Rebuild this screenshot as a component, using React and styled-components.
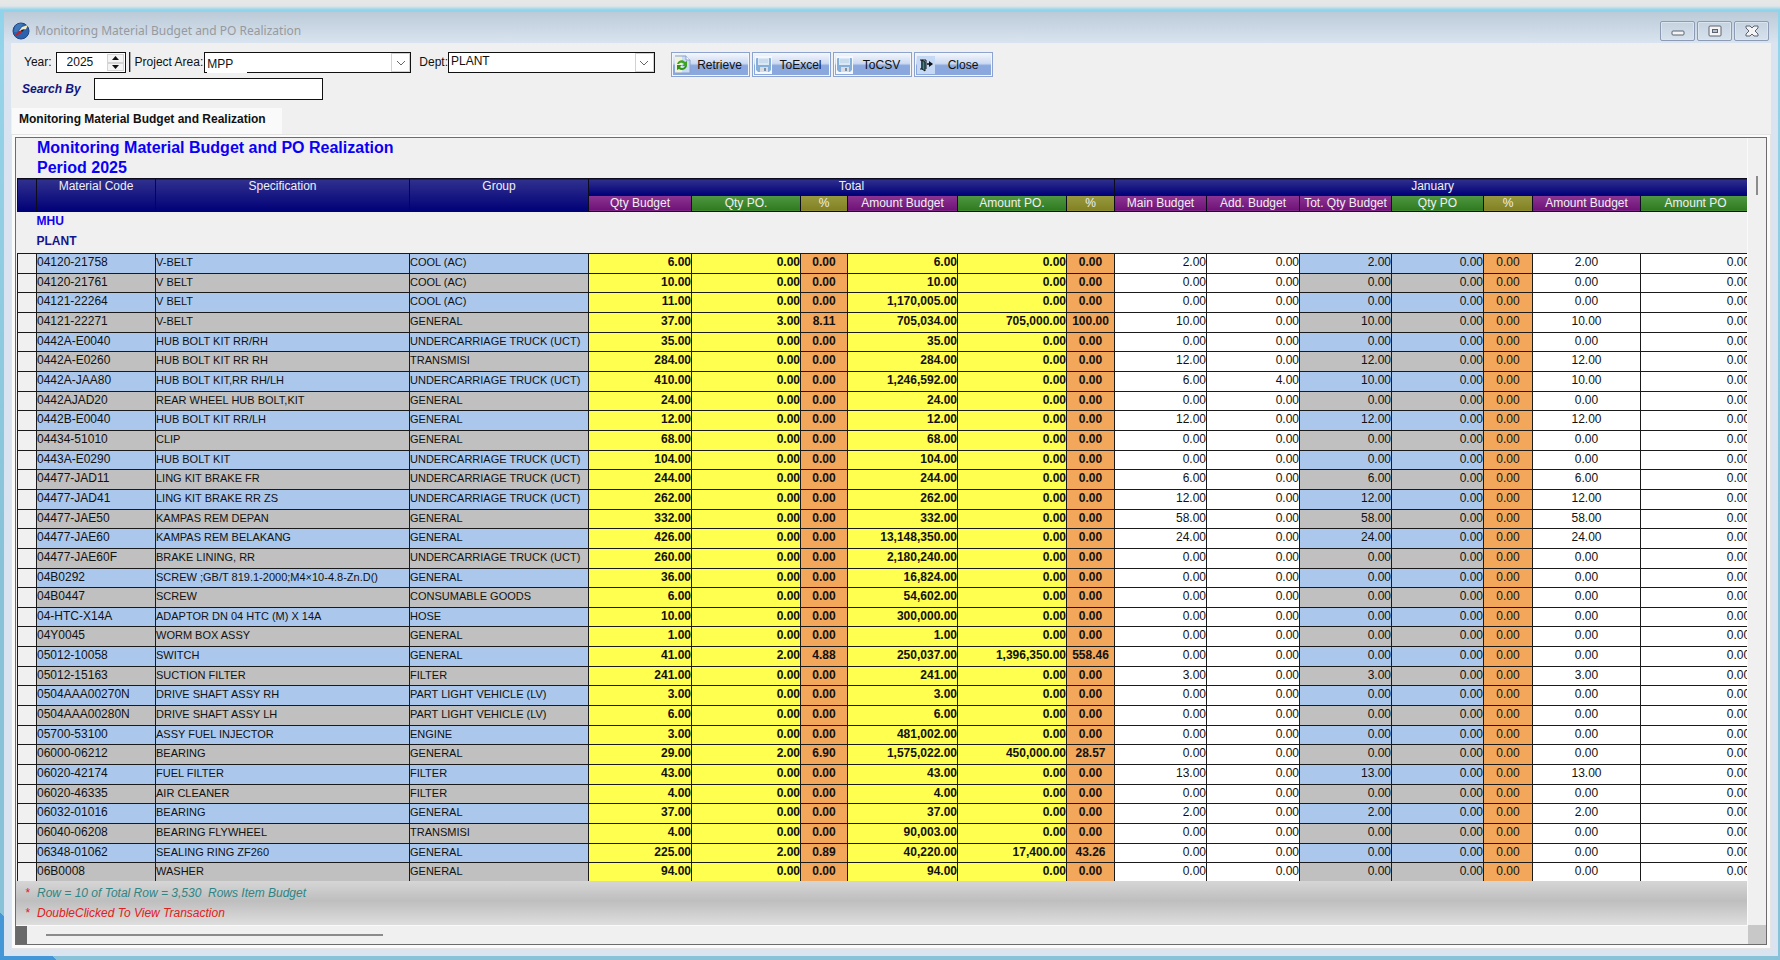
import React, { useState } from "react"
import styled, { createGlobalStyle } from "styled-components"

const GlobalStyle = createGlobalStyle`
  * {
    box-sizing: border-box;
  }
  body {
    margin: 0;
    font-family: "Liberation Sans", Arial, sans-serif;
    font-size: 12px;
    color: #111;
  }
  button, input, select {
    font: inherit;
    color: inherit;
  }
`

const Desktop = styled.div`
  min-height: 100vh;
  display: flex;
  padding: 12px 2px 4px 4px;
  background:
    linear-gradient(to top right, #4497d6 50%, transparent 50%) left bottom / 57px 47px no-repeat,
    linear-gradient(to bottom, #e6e8e6 0, #e2e6e6 6px, #8fd4ec 10px, #96d4ea 60px, #87c2d8 560px);
`

const Window = styled.div`
  flex: 1;
  min-width: 0;
  display: flex;
  flex-direction: column;
  padding: 0 7px 7px;
  background: linear-gradient(to bottom, #bccad7 0, #d9e4f0 31px);
`

const TitleBar = styled.header`
  display: flex;
  align-items: center;
  height: 31px;
  padding: 6px 2px 0 1px;
`

const WindowTitle = styled.h1`
  flex: 1;
  margin: 0 0 0 5px;
  font: 400 12px/16px "Noto Sans", sans-serif;
  color: #969a9f;
`

const WindowButtons = styled.div`
  display: flex;
  gap: 2px;
`

const WindowButton = styled.button`
  display: grid;
  place-items: center;
  width: 35px;
  height: 20px;
  padding: 0;
  border: 1px solid #8d9ab3;
  border-radius: 2px;
  background: transparent;
  box-shadow: inset 0 0 0 1px #dbe5ef;
`

const Client = styled.main`
  flex: 1;
  min-height: 0;
  display: flex;
  flex-direction: column;
  background: #f0f0f0;
`

const Toolbar = styled.div`
  display: flex;
  align-items: flex-start;
  height: 35px;
  padding: 9px 0 0 13px;
`

const Label = styled.label`
  line-height: 20px;
  white-space: nowrap;
  margin-right: ${p => p.$gap || 0}px;
`

const Divider = styled.span`
  width: 2px;
  height: 20px;
  margin: 0 4px 0 3px;
  border-left: 1px solid #222;
  border-right: 1px solid #aaa;
`

const YearBox = styled.div`
  display: flex;
  width: 70px;
  height: 21px;
  padding: 0 1px;
  border: 1px solid #111;
  background: #fff;
`

const YearInput = styled.input`
  flex: 1;
  min-width: 0;
  padding: 0 0 2px 9px;
  border: 0;
  background: transparent;
`

const Spinner = styled.div`
  display: grid;
  width: 17px;
  padding: 1px 0;
`

const SpinButton = styled.button`
  display: grid;
  place-items: center;
  padding: 0;
  border: 1px solid #d4d4d4;
  background: #f4f4f4;
`

const Combo = styled.div`
  position: relative;
  display: flex;
  width: 207px;
  height: 21px;
  margin-right: 8px;
  border: 1px solid #111;
  background: #fff;
  ${p => p.$notched && `
    &::after {
      content: "";
      position: absolute;
      left: 2px;
      bottom: -1px;
      width: 40px;
      height: 1px;
      background: #fff;
    }
  `}
`

const ComboSelect = styled.select`
  flex: 1;
  appearance: none;
  padding: ${p => (p.$low ? "2px" : "0")} 20px ${p => (p.$low ? "0" : "3px")} 2px;
  border: 0;
  background: transparent;
`

const ComboArrow = styled.span`
  position: absolute;
  top: 0;
  right: 0;
  bottom: 0;
  display: grid;
  place-items: center;
  width: 19px;
  border: 1px solid #d2d2d2;
  background: #fff;
  pointer-events: none;
`

const Actions = styled.div`
  display: flex;
  gap: 2px;
  margin-left: 8px;
`

const ActionButton = styled.button`
  display: flex;
  align-items: center;
  width: 79px;
  height: 25px;
  padding: 0 1px 0 2px;
  border: 1px solid #8ca2cf;
  box-shadow: inset 0 0 0 1px #f2f6fd;
  background: linear-gradient(to bottom, #f4f7fd 0, #cddaf2 45%, #8aa8de 55%, #8aa8de 100%);

  svg {
    flex: none;
  }
  span {
    flex: 1;
    text-align: center;
  }
`

const SearchRow = styled.div`
  display: flex;
  align-items: center;
  height: 22px;
  padding-left: 11px;
`

const SearchLabel = styled.label`
  width: 72px;
  font-weight: 700;
  font-style: italic;
  color: #14147c;
`

const SearchInput = styled.input`
  width: 229px;
  height: 22px;
  padding: 0 4px;
  border: 1px solid #111;
  background: #fff;
`

const TabBar = styled.div`
  display: flex;
  height: 34px;
  padding: 8px 0 0 1px;
`

const Tab = styled.button`
  width: 270px;
  padding: 0 0 4px 7px;
  border: 0;
  background: #fafafa;
  font-weight: 700;
  text-align: left;
  white-space: nowrap;
`

const TabPanel = styled.section`
  flex: 1;
  display: flex;
  padding: 2px 3px 3px;
  border: 1px solid #e4e4e4;
  background: #fbfbfb;
`

const Sheet = styled.div`
  flex: 1;
  min-width: 0;
  display: grid;
  grid-template: 1fr 19px / minmax(0, 1fr) 18px;
  border: 1px solid #6c6c6c;
  background: #f0f0f0;
`

const Report = styled.div`
  display: flex;
  flex-direction: column;
  overflow: hidden;
  border-right: 1px solid #fafafa;
`

const ReportTitle = styled.h2`
  margin: 0;
  padding-left: 21px;
  font-size: 16px;
  line-height: 20px;
  color: #0a00f5;
`

const TableArea = styled.div`
  flex: 1;
  display: grid;
  padding-left: 1px;
`

const Table = styled.table`
  width: 1733px;
  table-layout: fixed;
  border-collapse: collapse;
`

const headFill = {
  navy: "linear-gradient(to bottom, #30308e, #000078)",
  purple: "linear-gradient(to bottom, #8c3594, #6f1277)",
  green: "linear-gradient(to bottom, #509842, #2f7a20)",
  olive: "linear-gradient(to bottom, #98983f, #828224)",
}

const HeadCell = styled.th`
  height: ${p => (p.rowSpan ? 33 : 16)}px;
  padding: 0;
  border: 1px solid #0c0c1c;
  background: ${p => headFill[p.$fill]};
  color: #f0f0f4;
  font-weight: 400;
  line-height: 15px;
  vertical-align: top;
  white-space: nowrap;
`

const GroupCell = styled.th`
  height: 21px;
  padding: 0 0 3px 19px;
  color: ${p => p.$color};
  text-align: left;
`

const tones = { yellow: "#ffff50", orange: "#f2a75b", white: "#fff", none: "#f0f0f0" }

const Cell = styled.td`
  padding: 0;
  border: 1px solid #1a1a1a;
  background: ${p => tones[p.$tone] || (p.$even ? "#c0c0c0" : "#abc8ec")};
  font-size: ${p => (p.$small ? 11 : 12)}px;
  font-weight: ${p => (p.$bold ? 700 : 400)};
  line-height: 16px;
  text-align: ${p => p.$align || "left"};
  vertical-align: top;
  white-space: nowrap;

  tr:last-child > & {
    border-bottom: 0;
  }
`

const Footer = styled.footer`
  height: 44px;
  padding: 2px 0 0 9px;
  background: linear-gradient(to bottom, #d6d6d6, #bebebe 45%, #dedede);
`

const Note = styled.p`
  display: flex;
  margin: 0;
  font-style: italic;
  line-height: 20px;
  color: ${p => p.$color};
  white-space: pre;

  &::before {
    content: "*";
    width: 12px;
    color: #e02020;
  }
`

const VerticalScroll = styled.div`
  padding: 38px 0 0 8px;
`

const HorizontalScroll = styled.div`
  display: flex;
  align-items: center;
  border-top: 1px solid #fafafa;
`

const SplitHandle = styled.span`
  width: 11px;
  height: 100%;
  margin-right: 19px;
  background: #696969;
`

const Thumb = styled.div`
  width: ${p => (p.$vertical ? "2px" : "337px")};
  height: ${p => (p.$vertical ? "19px" : "2px")};
  background: #8b8b8b;
`

const Corner = styled.div`
  background: #c8c8c8;
`

const widths = [19, 119, 254, 179, 103, 109, 47, 110, 109, 48, 92, 93, 92, 92, 49, 108, 110]

const totalHeads = [
  ["Qty Budget", "purple"],
  ["Qty PO.", "green"],
  ["%", "olive"],
  ["Amount Budget", "purple"],
  ["Amount PO.", "green"],
  ["%", "olive"],
]

const monthHeads = [
  ["Main Budget", "purple"],
  ["Add. Budget", "purple"],
  ["Tot. Qty Budget", "purple"],
  ["Qty PO", "green"],
  ["%", "olive"],
  ["Amount Budget", "purple"],
  ["Amount PO", "green"],
]

// code, specification, group, qty, qty po, %, amount, amount po, %, january main, january add
const rows = [
  ["04120-21758", "V-BELT", "COOL (AC)", 6, 0, 0, 6, 0, 0, 2, 0],
  ["04120-21761", "V BELT", "COOL (AC)", 10, 0, 0, 10, 0, 0, 0, 0],
  ["04121-22264", "V BELT", "COOL (AC)", 11, 0, 0, 1170005, 0, 0, 0, 0],
  ["04121-22271", "V-BELT", "GENERAL", 37, 3, 8.11, 705034, 705000, 100, 10, 0],
  ["0442A-E0040", "HUB BOLT KIT RR/RH", "UNDERCARRIAGE TRUCK (UCT)", 35, 0, 0, 35, 0, 0, 0, 0],
  ["0442A-E0260", "HUB BOLT KIT RR RH", "TRANSMISI", 284, 0, 0, 284, 0, 0, 12, 0],
  ["0442A-JAA80", "HUB BOLT KIT,RR RH/LH", "UNDERCARRIAGE TRUCK (UCT)", 410, 0, 0, 1246592, 0, 0, 6, 4],
  ["0442AJAD20", "REAR WHEEL HUB BOLT,KIT", "GENERAL", 24, 0, 0, 24, 0, 0, 0, 0],
  ["0442B-E0040", "HUB BOLT KIT RR/LH", "GENERAL", 12, 0, 0, 12, 0, 0, 12, 0],
  ["04434-51010", "CLIP", "GENERAL", 68, 0, 0, 68, 0, 0, 0, 0],
  ["0443A-E0290", "HUB BOLT KIT", "UNDERCARRIAGE TRUCK (UCT)", 104, 0, 0, 104, 0, 0, 0, 0],
  ["04477-JAD11", "LING KIT BRAKE FR", "UNDERCARRIAGE TRUCK (UCT)", 244, 0, 0, 244, 0, 0, 6, 0],
  ["04477-JAD41", "LING KIT BRAKE RR ZS", "UNDERCARRIAGE TRUCK (UCT)", 262, 0, 0, 262, 0, 0, 12, 0],
  ["04477-JAE50", "KAMPAS REM DEPAN", "GENERAL", 332, 0, 0, 332, 0, 0, 58, 0],
  ["04477-JAE60", "KAMPAS REM BELAKANG", "GENERAL", 426, 0, 0, 13148350, 0, 0, 24, 0],
  ["04477-JAE60F", "BRAKE LINING, RR", "UNDERCARRIAGE TRUCK (UCT)", 260, 0, 0, 2180240, 0, 0, 0, 0],
  ["04B0292", "SCREW ;GB/T 819.1-2000;M4×10-4.8-Zn.D()", "GENERAL", 36, 0, 0, 16824, 0, 0, 0, 0],
  ["04B0447", "SCREW", "CONSUMABLE GOODS", 6, 0, 0, 54602, 0, 0, 0, 0],
  ["04-HTC-X14A", "ADAPTOR DN 04 HTC (M) X 14A", "HOSE", 10, 0, 0, 300000, 0, 0, 0, 0],
  ["04Y0045", "WORM BOX ASSY", "GENERAL", 1, 0, 0, 1, 0, 0, 0, 0],
  ["05012-10058", "SWITCH", "GENERAL", 41, 2, 4.88, 250037, 1396350, 558.46, 0, 0],
  ["05012-15163", "SUCTION FILTER", "FILTER", 241, 0, 0, 241, 0, 0, 3, 0],
  ["0504AAA00270N", "DRIVE SHAFT ASSY RH", "PART LIGHT VEHICLE (LV)", 3, 0, 0, 3, 0, 0, 0, 0],
  ["0504AAA00280N", "DRIVE SHAFT ASSY LH", "PART LIGHT VEHICLE (LV)", 6, 0, 0, 6, 0, 0, 0, 0],
  ["05700-53100", "ASSY FUEL INJECTOR", "ENGINE", 3, 0, 0, 481002, 0, 0, 0, 0],
  ["06000-06212", "BEARING", "GENERAL", 29, 2, 6.9, 1575022, 450000, 28.57, 0, 0],
  ["06020-42174", "FUEL FILTER", "FILTER", 43, 0, 0, 43, 0, 0, 13, 0],
  ["06020-46335", "AIR CLEANER", "FILTER", 4, 0, 0, 4, 0, 0, 0, 0],
  ["06032-01016", "BEARING", "GENERAL", 37, 0, 0, 37, 0, 0, 2, 0],
  ["06040-06208", "BEARING FLYWHEEL", "TRANSMISI", 4, 0, 0, 90003, 0, 0, 0, 0],
  ["06348-01062", "SEALING RING ZF260", "GENERAL", 225, 2, 0.89, 40220, 17400, 43.26, 0, 0],
  ["06B0008", "WASHER", "GENERAL", 94, 0, 0, 94, 0, 0, 0, 0],
]

const money = n => n.toLocaleString("en-US", { minimumFractionDigits: 2, maximumFractionDigits: 2 })

function AppIcon() {
  return (
    <svg width="18" height="18" viewBox="0 0 18 18" aria-hidden="true">
      <circle cx="9" cy="9" r="8" fill="#2c62ad" stroke="#1d4483" />
      <path d="M3 5a7 7 0 0 1 8-3L5 10H2z" fill="#3f78b8" />
      <path d="M7 9 10 5l6-2-2 4-5 2z" fill="#f3eebb" />
      <path d="M3 13l4-4 4-1-2 3-5 3z" fill="#b8232d" />
      <path d="M9 8l4-1-3 3z" fill="#171a2c" />
    </svg>
  )
}

function RefreshIcon() {
  return (
    <svg width="17" height="19" viewBox="0 0 17 19" aria-hidden="true">
      <path d="M1 1h11l4 4v13H1z" fill="#eef3d9" />
      <path d="M8 1h4l4 4v13H8z" fill="#c9dcf5" />
      <path d="M1 1h11l4 4v13H1" fill="none" stroke="#8d9fc9" />
      <path d="M12 1v4h4" fill="#fff" stroke="#8d9fc9" />
      <path d="M3 9c1-4 6-5 8-2l2-1v5H8l2-2C8 7 6 8 5 9z" fill="#3fa321" />
      <path d="M13 11c-1 4-6 5-8 3l-2 1v-5h5l-2 2c2 2 4 1 5-1z" fill="#2f9416" />
    </svg>
  )
}

function DiskIcon() {
  return (
    <svg width="17" height="18" viewBox="0 0 17 18" aria-hidden="true">
      <rect width="17" height="18" fill="#f4f8fd" />
      <path d="M1 3q0-1 1-1h13q1 0 1 1v11l-2 2H3l-2-2z" fill="#86afd9" />
      <rect x="3" y="2" width="11" height="7" fill="#dbe8f5" />
      <path d="M4 4h9M4 6h9" stroke="#b7cfe8" />
      <rect x="5" y="11" width="8" height="5" fill="#d9dde2" />
      <rect x="9" y="12" width="2" height="3" fill="#7b8ea6" />
    </svg>
  )
}

function ExitIcon() {
  return (
    <svg width="18" height="18" viewBox="0 0 18 18" aria-hidden="true">
      <rect width="18" height="18" fill="#c6d9f4" />
      <path d="M3 4h6M5 4v9M9 4v9M3 13h2" fill="none" stroke="#111" />
      <path d="M5 4l3 2v9l-3-2z" fill="#3d8b91" stroke="#111" />
      <path d="M10 8h5" fill="none" stroke="#111" strokeWidth="1.5" />
      <path d="M12 5l4 3-4 3z" fill="#111" />
    </svg>
  )
}

function ComboBox({ id, options, low }) {
  const [value, setValue] = useState(options[0])
  return (
    <Combo $notched={low}>
      <ComboSelect id={id} $low={low} value={value} onChange={e => setValue(e.target.value)}>
        {options.map(o => <option key={o}>{o}</option>)}
      </ComboSelect>
      <ComboArrow>
        <svg width="10" height="6" viewBox="0 0 10 6" aria-hidden="true">
          <path d="M1 1l4 4 4-4" fill="none" stroke="#666" />
        </svg>
      </ComboArrow>
    </Combo>
  )
}

function MaterialRow({ row, even }) {
  const [code, spec, group, qty, qtyPo, pct, amount, amountPo, amountPct, main, add] = row
  const tot = main + add
  return (
    <tr>
      <Cell $tone="none" />
      <Cell $even={even}>{code}</Cell>
      <Cell $even={even} $small>{spec}</Cell>
      <Cell $even={even} $small>{group}</Cell>
      <Cell $tone="yellow" $bold $align="right">{money(qty)}</Cell>
      <Cell $tone="yellow" $bold $align="right">{money(qtyPo)}</Cell>
      <Cell $tone="orange" $bold $align="center">{money(pct)}</Cell>
      <Cell $tone="yellow" $bold $align="right">{money(amount)}</Cell>
      <Cell $tone="yellow" $bold $align="right">{money(amountPo)}</Cell>
      <Cell $tone="orange" $bold $align="center">{money(amountPct)}</Cell>
      <Cell $tone="white" $align="right">{money(main)}</Cell>
      <Cell $tone="white" $align="right">{money(add)}</Cell>
      <Cell $even={even} $align="right">{money(tot)}</Cell>
      <Cell $even={even} $align="right">{money(0)}</Cell>
      <Cell $tone="orange" $align="center">{money(0)}</Cell>
      <Cell $tone="white" $align="center">{money(tot)}</Cell>
      <Cell $tone="white" $align="right">{money(0)}</Cell>
    </tr>
  )
}

function BudgetTable() {
  return (
    <Table>
      <colgroup>
        {widths.map((w, i) => <col key={i} width={w} />)}
      </colgroup>
      <thead>
        <tr>
          <HeadCell rowSpan={2} $fill="navy" />
          <HeadCell rowSpan={2} $fill="navy">Material Code</HeadCell>
          <HeadCell rowSpan={2} $fill="navy">Specification</HeadCell>
          <HeadCell rowSpan={2} $fill="navy">Group</HeadCell>
          <HeadCell colSpan={6} $fill="navy">Total</HeadCell>
          <HeadCell colSpan={7} $fill="navy">January</HeadCell>
        </tr>
        <tr>
          {[...totalHeads, ...monthHeads].map(([text, fill], i) => (
            <HeadCell key={i} $fill={fill}>{text}</HeadCell>
          ))}
        </tr>
        <tr>
          <GroupCell colSpan={17} $color="#1400f0">MHU</GroupCell>
        </tr>
        <tr>
          <GroupCell colSpan={17} $color="#14148c">PLANT</GroupCell>
        </tr>
      </thead>
      <tbody>
        {rows.map((row, i) => <MaterialRow key={row[0]} row={row} even={i % 2 === 1} />)}
      </tbody>
    </Table>
  )
}

function App() {
  const [year, setYear] = useState(2025)
  const [search, setSearch] = useState("")

  return (
    <>
      <GlobalStyle />
      <Desktop>
        <Window>
          <TitleBar>
            <AppIcon />
            <WindowTitle>Monitoring Material Budget and PO Realization</WindowTitle>
            <WindowButtons>
              <WindowButton aria-label="Minimize">
                <svg width="14" height="14" viewBox="0 0 14 14">
                  <rect x="1" y="7" width="12" height="4" rx="1" fill="#f4f4f4" stroke="#5c6270" />
                </svg>
              </WindowButton>
              <WindowButton aria-label="Maximize">
                <svg width="14" height="12" viewBox="0 0 14 12">
                  <rect x="1" y="1" width="12" height="10" rx="1" fill="#f4f4f4" stroke="#5c6270" />
                  <rect x="4.500" y="4.500" width="5" height="3" fill="#b4bfce" stroke="#5c6270" />
                </svg>
              </WindowButton>
              <WindowButton aria-label="Close window">
                <svg width="14" height="12" viewBox="0 0 14 12">
                  <path d="M1 1h4l2 2 2-2h4v2l-3 3 3 3v2H9L7 9l-2 2H1V9l3-3-3-3z" fill="#f4f4f4" stroke="#5c6270" strokeLinejoin="round" />
                </svg>
              </WindowButton>
            </WindowButtons>
          </TitleBar>
          <Client>
            <Toolbar>
              <Label htmlFor="year" $gap={4}>Year:</Label>
              <YearBox>
                <YearInput id="year" value={year} onChange={e => setYear(Number(e.target.value) || 0)} />
                <Spinner>
                  <SpinButton aria-label="Next year" onClick={() => setYear(year + 1)}>
                    <svg width="7" height="4" viewBox="0 0 7 4"><path d="M0 4l3.500-4L7 4z" fill="#111" /></svg>
                  </SpinButton>
                  <SpinButton aria-label="Previous year" onClick={() => setYear(year - 1)}>
                    <svg width="7" height="4" viewBox="0 0 7 4"><path d="M0 0l3.500 4L7 0z" fill="#111" /></svg>
                  </SpinButton>
                </Spinner>
              </YearBox>
              <Divider />
              <Label htmlFor="area" $gap={1}>Project Area:</Label>
              <ComboBox id="area" options={["MPP"]} low />
              <Label htmlFor="dept">Dept:</Label>
              <ComboBox id="dept" options={["PLANT"]} />
              <Actions>
                <ActionButton><RefreshIcon /><span>Retrieve</span></ActionButton>
                <ActionButton><DiskIcon /><span>ToExcel</span></ActionButton>
                <ActionButton><DiskIcon /><span>ToCSV</span></ActionButton>
                <ActionButton><ExitIcon /><span>Close</span></ActionButton>
              </Actions>
            </Toolbar>
            <SearchRow>
              <SearchLabel htmlFor="search">Search By</SearchLabel>
              <SearchInput id="search" value={search} onChange={e => setSearch(e.target.value)} />
            </SearchRow>
            <TabBar role="tablist">
              <Tab role="tab" aria-selected="true">Monitoring Material Budget and Realization</Tab>
            </TabBar>
            <TabPanel role="tabpanel">
              <Sheet>
                <Report>
                  <ReportTitle>Monitoring Material Budget and PO Realization<br />Period {year}</ReportTitle>
                  <TableArea>
                    <BudgetTable />
                  </TableArea>
                  <Footer>
                    <Note $color="#2f8583">Row = 10 of Total Row = 3,530  Rows Item Budget</Note>
                    <Note $color="#e02020">DoubleClicked To View Transaction</Note>
                  </Footer>
                </Report>
                <VerticalScroll><Thumb $vertical /></VerticalScroll>
                <HorizontalScroll>
                  <SplitHandle />
                  <Thumb />
                </HorizontalScroll>
                <Corner />
              </Sheet>
            </TabPanel>
          </Client>
        </Window>
      </Desktop>
    </>
  )
}

export default App
